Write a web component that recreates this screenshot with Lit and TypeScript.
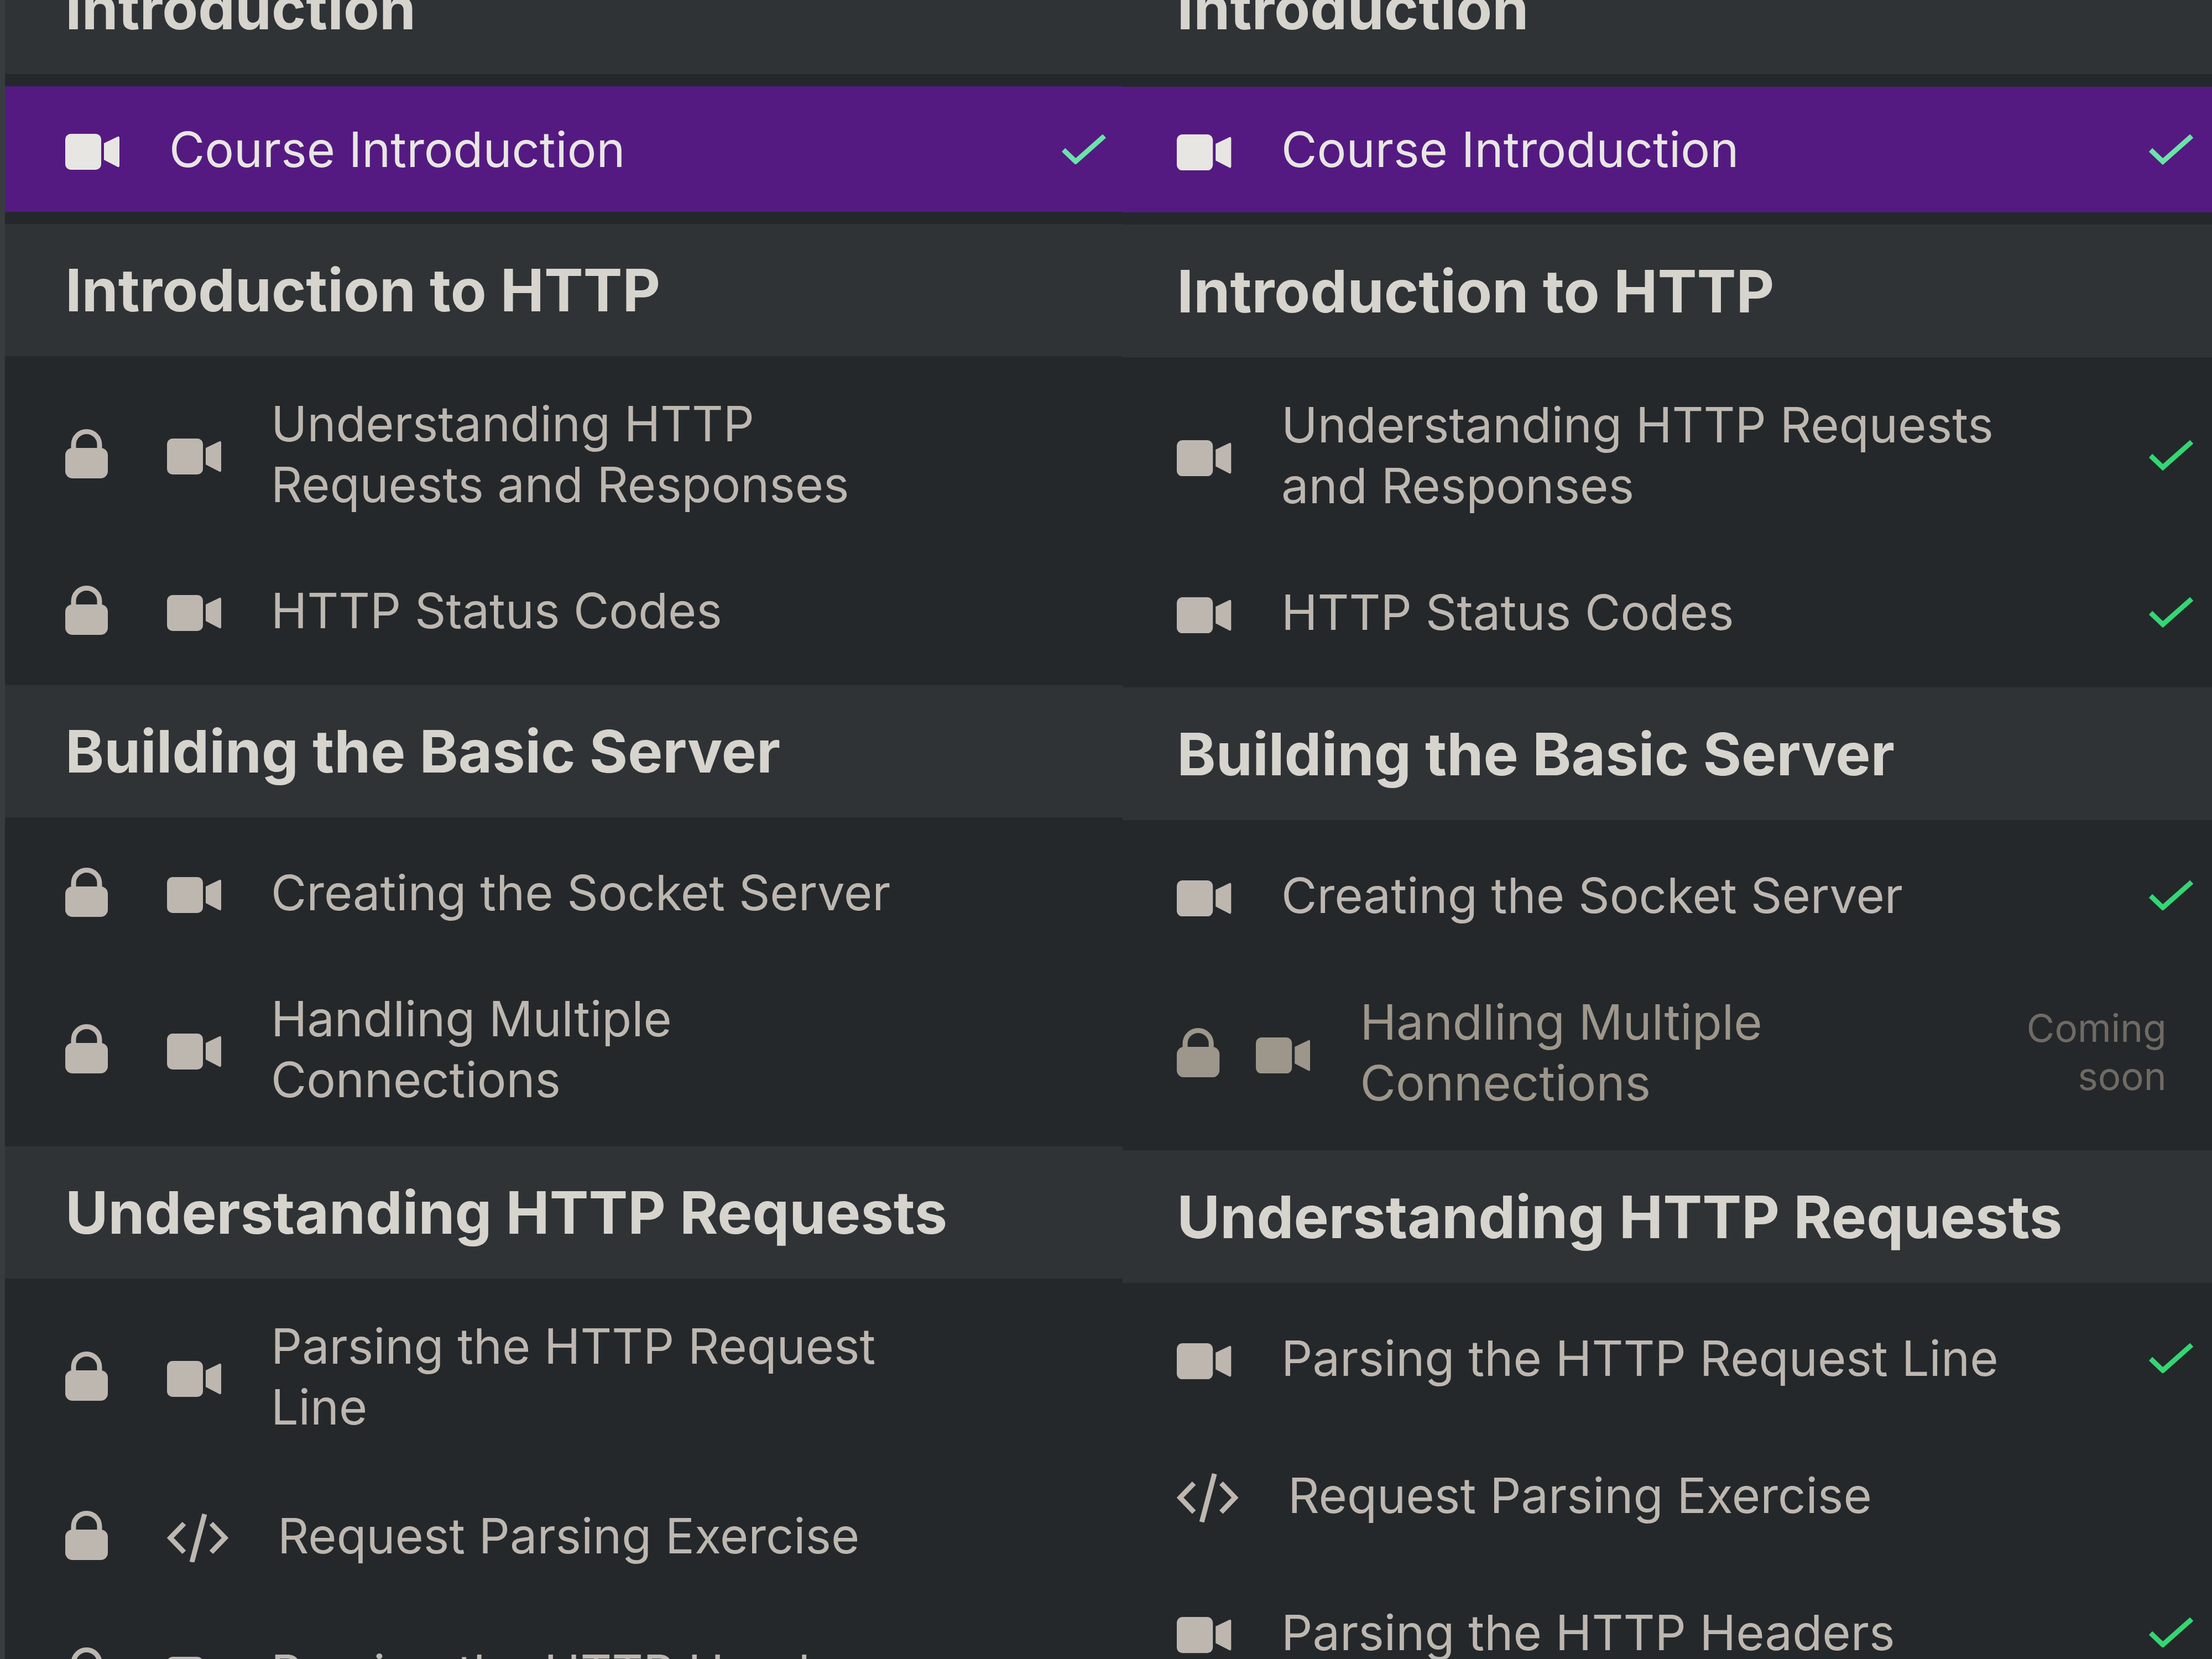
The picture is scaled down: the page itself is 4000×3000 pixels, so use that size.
import { LitElement, css, html, nothing } from 'lit';
import { customElement, property } from 'lit/decorators.js';

type Kind = 'video' | 'code';
interface Lesson {
  title: string;
  kind: Kind;
  locked?: boolean;
  done?: boolean;
  active?: boolean;
  soon?: boolean;
}
interface Section {
  title: string;
  lessons: Lesson[];
}

const OUTLINE: { title: string; lessons: { title: string; kind: Kind; active?: boolean }[] }[] = [
  { title: 'Introduction', lessons: [{ title: 'Course Introduction', kind: 'video', active: true }] },
  {
    title: 'Introduction to HTTP',
    lessons: [
      { title: 'Understanding HTTP Requests and Responses', kind: 'video' },
      { title: 'HTTP Status Codes', kind: 'video' },
    ],
  },
  {
    title: 'Building the Basic Server',
    lessons: [
      { title: 'Creating the Socket Server', kind: 'video' },
      { title: 'Handling Multiple Connections', kind: 'video' },
    ],
  },
  {
    title: 'Understanding HTTP Requests',
    lessons: [
      { title: 'Parsing the HTTP Request Line', kind: 'video' },
      { title: 'Request Parsing Exercise', kind: 'code' },
      { title: 'Parsing the HTTP Headers', kind: 'video' },
    ],
  },
];

// left column: only the first lesson is open
const lockedCourse: Section[] = OUTLINE.map(s => ({
  title: s.title,
  lessons: s.lessons.map(l => (l.active ? { ...l, done: true } : { ...l, locked: true })),
}));

// right column: enrolled, all finished but the exercise and the unreleased lesson
const openCourse: Section[] = OUTLINE.map(s => ({
  title: s.title,
  lessons: s.lessons.map(l => {
    if (l.title === 'Handling Multiple Connections') return { ...l, locked: true, soon: true };
    return { ...l, done: l.kind === 'video' };
  }),
}));

const lockIcon = html`<svg class="lock" viewBox="0 0 77 89">
  <path d="M15 40V28a23.500 23.500 0 0 1 47 0v12" fill="none" stroke="currentColor" stroke-width="9" />
  <rect x="0" y="34" width="77" height="55" rx="13" fill="currentColor" />
</svg>`;

// the extra 10 units on top keep the glyph a little below the text centre, as in the app
const videoIcon = html`<svg class="video" viewBox="0 -10 98 75">
  <rect x="0" y="0" width="65" height="65" rx="10" fill="currentColor" />
  <path d="M70 17 95 5Q98 4 98 8V57Q98 61 95 60L70 47Z" fill="currentColor" />
</svg>`;

const codeIcon = html`<svg class="code" viewBox="0 -10 111 97">
  <g fill="none" stroke="currentColor" stroke-width="9">
    <path d="M31 17 6 43 31 69" />
    <path d="M80 17 105 43 80 69" />
    <path d="M45 87 68 0" />
  </g>
</svg>`;

const checkIcon = html`<svg class="check" viewBox="0 0 80 54">
  <path d="M3 28 25 49 77 3" fill="none" stroke="currentColor" stroke-width="9" />
</svg>`;

@customElement('course-panel')
export class CoursePanel extends LitElement {
  static styles = css`
    :host {
      display: block;
      overflow: hidden;
      background: #24282b;
      color: #bdb7b0;
      font-family: Inter, 'Noto Sans', sans-serif;
    }
    .list {
      margin-top: -105px;
    }
    .head {
      height: 239px;
      box-sizing: border-box;
      padding-left: var(--inset);
      display: flex;
      align-items: center;
      background: #2f3336;
      color: #d6d4cd;
      font-size: 106px;
      font-weight: 700;
    }
    .rows {
      display: flex;
      flex-direction: column;
      gap: 15px;
      padding: 22px 0;
    }
    .row {
      display: flex;
      align-items: center;
      box-sizing: border-box;
      min-height: 227px;
      padding: 44.5px var(--end) 44.5px var(--inset);
    }
    .row.exercise {
      min-height: 237px;
    }
    .row.active {
      background: #541a82;
      color: #e8e6e3;
    }
    .row.dim {
      color: #9d968a;
    }
    .lock {
      width: 77px;
      height: 89px;
      flex: none;
      margin-right: var(--lock-gap);
    }
    .video {
      width: 98px;
      height: 75px;
      flex: none;
      margin-right: 90px;
    }
    .code {
      width: 111px;
      height: 97px;
      flex: none;
      margin-right: 89px;
    }
    .title {
      max-width: 1150px;
      font-size: 88px;
      line-height: 110px;
    }
    .row.open .title {
      max-width: 1300px;
    }
    .check {
      width: 80px;
      height: 54px;
      flex: none;
      margin-left: auto;
      color: #34d673;
    }
    .row.active .check {
      color: #6ae3a8;
    }
    .soon {
      width: min-content;
      margin-left: auto;
      margin-right: 48px;
      text-align: right;
      color: #6f6b64;
      font-size: 69px;
      line-height: 87px;
    }
  `;

  @property({ attribute: false }) sections: Section[] = [];

  private renderLesson(l: Lesson) {
    const cls = [
      'row',
      l.active ? 'active' : '',
      l.locked ? '' : 'open',
      l.soon ? 'dim' : '',
      l.kind === 'code' ? 'exercise' : '',
    ].join(' ');
    return html`
      <div class=${cls}>
        ${l.locked ? lockIcon : nothing}
        ${l.kind === 'video' ? videoIcon : codeIcon}
        <span class="title">${l.title}</span>
        ${l.done ? checkIcon : nothing}
        ${l.soon ? html`<span class="soon">Coming soon</span>` : nothing}
      </div>
    `;
  }

  render() {
    return html`
      <div class="list">
        ${this.sections.map(
          s => html`
            <div class="head">${s.title}</div>
            <div class="rows">${s.lessons.map(l => this.renderLesson(l))}</div>
          `
        )}
      </div>
    `;
  }
}

@customElement('app-root')
export class AppRoot extends LitElement {
  static styles = css`
    :host {
      display: grid;
      grid-template-columns: 2030px 1970px;
      width: 4000px;
      height: 3000px;
      overflow: hidden;
      background: #24282b;
    }
    .locked {
      --inset: 109px;
      --end: 30px;
      --lock-gap: 107px;
      border-left: 9px solid #373d3f;
    }
    .unlocked {
      --inset: 98px;
      --end: 34px;
      --lock-gap: 65px;
      zoom: 1.0036;
    }
  `;

  render() {
    return html`
      <course-panel class="locked" .sections=${lockedCourse}></course-panel>
      <course-panel class="unlocked" .sections=${openCourse}></course-panel>
    `;
  }
}
